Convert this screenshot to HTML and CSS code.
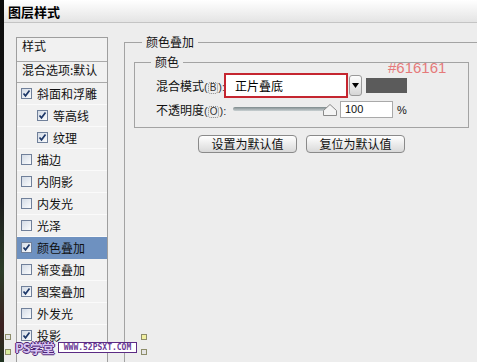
FILE: index.html
```html
<!DOCTYPE html>
<html lang="zh-CN">
  <head>
    <meta charset="UTF-8" />
    <title>图层样式</title>
    <link rel="stylesheet" href="styles.css">
  </head>
  <body>
    <div class="edge"></div>

    <div class="dialog">
      <!-- Title bar -->
      <div class="titlebar">图层样式</div>

      <div class="content">
        <!-- Effects list -->
        <div class="list">
          <div class="list-head first">样式</div>
          <div class="list-head">混合选项:默认</div>
          <div class="row"><span class="check on"></span>斜面和浮雕</div>
          <div class="row sub"><span class="check on"></span>等高线</div>
          <div class="row sub"><span class="check on"></span>纹理</div>
          <div class="row"><span class="check"></span>描边</div>
          <div class="row"><span class="check"></span>内阴影</div>
          <div class="row"><span class="check"></span>内发光</div>
          <div class="row"><span class="check"></span>光泽</div>
          <div class="row active"><span class="check on"></span>颜色叠加</div>
          <div class="row"><span class="check"></span>渐变叠加</div>
          <div class="row"><span class="check on"></span>图案叠加</div>
          <div class="row"><span class="check"></span>外发光</div>
          <div class="row"><span class="check on"></span>投影</div>
        </div>

        <!-- Colour overlay settings -->
        <fieldset class="group">
          <legend>颜色叠加</legend>
          <fieldset class="subgroup">
            <legend>颜色</legend>
            <div class="field">
              <span class="label">混合模式<span class="key">(<u>B</u>):</span></span>
              <div class="select">正片叠底</div>
              <div class="drop">
                <svg width="7" height="5" viewBox="0 0 7 5"><polygon points="0,0 7,0 3.5,5" fill="#000"/></svg>
              </div>
              <div class="swatch"></div>
            </div>
            <div class="field second">
              <span class="label">不透明度<span class="key">(<u>O</u>):</span></span>
              <svg class="slider" width="104" height="15" viewBox="0 0 104 15">
                <defs>
                  <linearGradient id="track" x1="0" y1="0" x2="0" y2="1">
                    <stop offset="0" stop-color="#7e8a8c"/>
                    <stop offset="1" stop-color="#c9d0d2"/>
                  </linearGradient>
                </defs>
                <rect x="0" y="5" width="98" height="4" rx="2" fill="url(#track)"/>
                <polygon points="90.5,13.5 90.5,8.5 97,2.5 103.5,8.5 103.5,13.5" fill="#f4f4f4" stroke="#8a8a8a"/>
              </svg>
              <div class="number">100</div>
              <span class="unit">%</span>
            </div>
          </fieldset>
          <div class="buttons">
            <button class="btn">设置为默认值</button>
            <button class="btn">复位为默认值</button>
          </div>
        </fieldset>
      </div>
    </div>

    <!-- annotation and watermark laid over the dialog -->
    <div class="hex-note">#616161</div>
    <span class="mark m1"></span>
    <span class="mark m2"></span>
    <span class="mark m3"></span>
    <span class="mark m4"></span>
    <div class="wm-logo">PS学堂</div>
    <div class="wm-url">WWW.52PSXT.COM</div>
  </body>
</html>
```

FILE: styles.css
```css
/* Page frame */
body {
  margin: 0;
  height: 362px;
  overflow: hidden;
  display: flex;
  position: relative;
  background: #ededed;
  font-family: "Noto Sans CJK SC", "DejaVu Sans", sans-serif;
  font-size: 12px;
  color: #111;
}

/* dark photo strip on the far left */
.edge {
  width: 4px;
  flex-shrink: 0;
  background: linear-gradient(#0c0c0c, #1a1a1a 55%, #2c3d28 75%, #3c2020 90%, #1f3321);
}

.dialog {
  flex: 1;
  display: flex;
  flex-direction: column;
  min-width: 0;
}

/* Title bar */
.titlebar {
  height: 23px;
  box-sizing: border-box;
  padding: 2px 0 0 4px;
  line-height: 20px;
  font-size: 13px;
  font-weight: bold;
  color: #000;
  background: linear-gradient(#ffffff, #e4e4e4);
  border-bottom: 1px solid #c4c4c4;
}

.content {
  display: flex;
  align-items: flex-start;
  padding: 11px 0 0 12px;
}

/* Effects list */
.list {
  width: 92px;
  height: 340px;
  margin-top: 3px;
  flex-shrink: 0;
  box-sizing: border-box;
  border: 1px solid #9e9e9e;
  background: #f1f1f1;
}

.list-head {
  height: 20px;
  padding-left: 5px;
  line-height: 16px;
  border-bottom: 1px solid #a9a9a9;
}

.list-head.first {
  height: 23px;
}

.row {
  height: 21px;
  display: flex;
  align-items: center;
  gap: 5px;
  padding-left: 4px;
  border-bottom: 1px solid #fafafa;
}

.row.sub {
  padding-left: 20px;
}

.row.active {
  background: #6e91c0;
  border-bottom-color: #6e91c0;
}

/* Checkbox */
.check {
  width: 11px;
  height: 11px;
  box-sizing: border-box;
  border: 1px solid #70809a;
  background: linear-gradient(135deg, #d3dbe6, #fbfcfd);
  flex-shrink: 0;
}

.check.on {
  background-image: url("data:image/svg+xml,%3Csvg xmlns='http://www.w3.org/2000/svg' width='9' height='9'%3E%3Cpolyline points='1.5,4.5 3.5,6.8 7.5,1.5' fill='none' stroke='%231c3768' stroke-width='1.7'/%3E%3C/svg%3E"),
    linear-gradient(135deg, #d3dbe6, #fbfcfd);
}

/* Group boxes */
.group {
  margin: 0 0 0 16px;
  padding: 4px 0 0 9px;
  width: 380px;
  height: 340px;
  min-width: 0;
  border: 1px solid #a3a3a3;
  border-right: none;
  border-bottom: none;
}

legend {
  padding: 0 4px;
  margin-left: 8px;
  line-height: 16px;
}

.subgroup {
  width: 335px;
  box-sizing: border-box;
  margin: 0;
  padding: 0 0 9px 21px;
  border: 1px solid #a3a3a3;
}

.subgroup legend {
  margin-left: -5px;
}

.field {
  display: flex;
  align-items: center;
  margin-top: 3px;
}

.label {
  width: 68px;
  flex-shrink: 0;
  white-space: nowrap;
}

.key {
  font-family: "Liberation Sans", sans-serif;
  font-size: 11px;
  color: #333;
}

.key u {
  text-decoration: none;
  display: inline-block;
  line-height: 10px;
  padding: 0 1px;
  border: 1px dotted #888;
  border-radius: 3px;
  font-size: 10px;
}

.select {
  width: 124px;
  height: 25px;
  box-sizing: border-box;
  padding-left: 9px;
  line-height: 21px;
  border: 2px solid #c52630;
  background: #fff;
  color: #000;
}

.drop {
  width: 13px;
  height: 21px;
  margin-left: 1px;
  box-sizing: border-box;
  border: 1px solid #9a9a9a;
  border-radius: 3px;
  background: linear-gradient(#fdfdfd, #d6d6d6);
  display: flex;
  align-items: center;
  justify-content: center;
}

.swatch {
  width: 41px;
  height: 15px;
  margin-left: 4px;
  background: #5b5b5b;
}

.slider {
  margin-left: 9px;
}

.number {
  width: 53px;
  height: 17px;
  margin-left: 3px;
  box-sizing: border-box;
  padding-left: 4px;
  line-height: 15px;
  border: 1px solid #a9a9a9;
  background: #fff;
  font-family: "Liberation Sans", sans-serif;
  font-size: 11px;
}

.unit {
  margin-left: 4px;
  font-family: "Liberation Sans", sans-serif;
  font-size: 11px;
}

/* Default buttons */
.buttons {
  width: 335px;
  display: flex;
  justify-content: center;
  gap: 9px;
  margin-top: 7px;
}

.btn {
  width: 99px;
  height: 18px;
  padding: 0;
  border: 1px solid #8a8a8a;
  border-radius: 4px;
  background: linear-gradient(#ffffff, #d9d9d9);
  font-family: inherit;
  font-size: 12px;
  line-height: 14px;
  color: #111;
}

/* Red colour note drawn on top */
.hex-note {
  position: absolute;
  left: 388px;
  top: 59px;
  font-family: "Liberation Sans", sans-serif;
  font-size: 15px;
  line-height: 18px;
  color: #e57a7a;
}

/* Watermark */
.mark {
  position: absolute;
  width: 6px;
  height: 6px;
  box-sizing: border-box;
  border: 1px solid #8d8d6a;
  background: #f1efa0;
}

.m1 { left: 5px; top: 334px; background: #e4e4e4; }
.m2 { left: 141px; top: 334px; }
.m3 { left: 5px; top: 349px; background: #d8ec9c; }
.m4 { left: 141px; top: 349px; background: #e4e4e4; }

.wm-logo {
  position: absolute;
  left: 15px;
  top: 340px;
  font-size: 13px;
  line-height: 16px;
  font-weight: bold;
  letter-spacing: -1px;
  color: #d7c4f2;
  text-shadow: 1px 0 #4d2274, -1px 0 #4d2274, 0 1px #4d2274, 0 -1px #4d2274;
}

.wm-url {
  position: absolute;
  left: 58px;
  top: 342px;
  width: 79px;
  height: 11px;
  box-sizing: border-box;
  border: 1px solid #5b2b84;
  background: #fff;
  font-family: "DejaVu Sans Mono", monospace;
  font-size: 8px;
  font-weight: bold;
  line-height: 9px;
  text-align: center;
  color: #6a3a96;
}
```
